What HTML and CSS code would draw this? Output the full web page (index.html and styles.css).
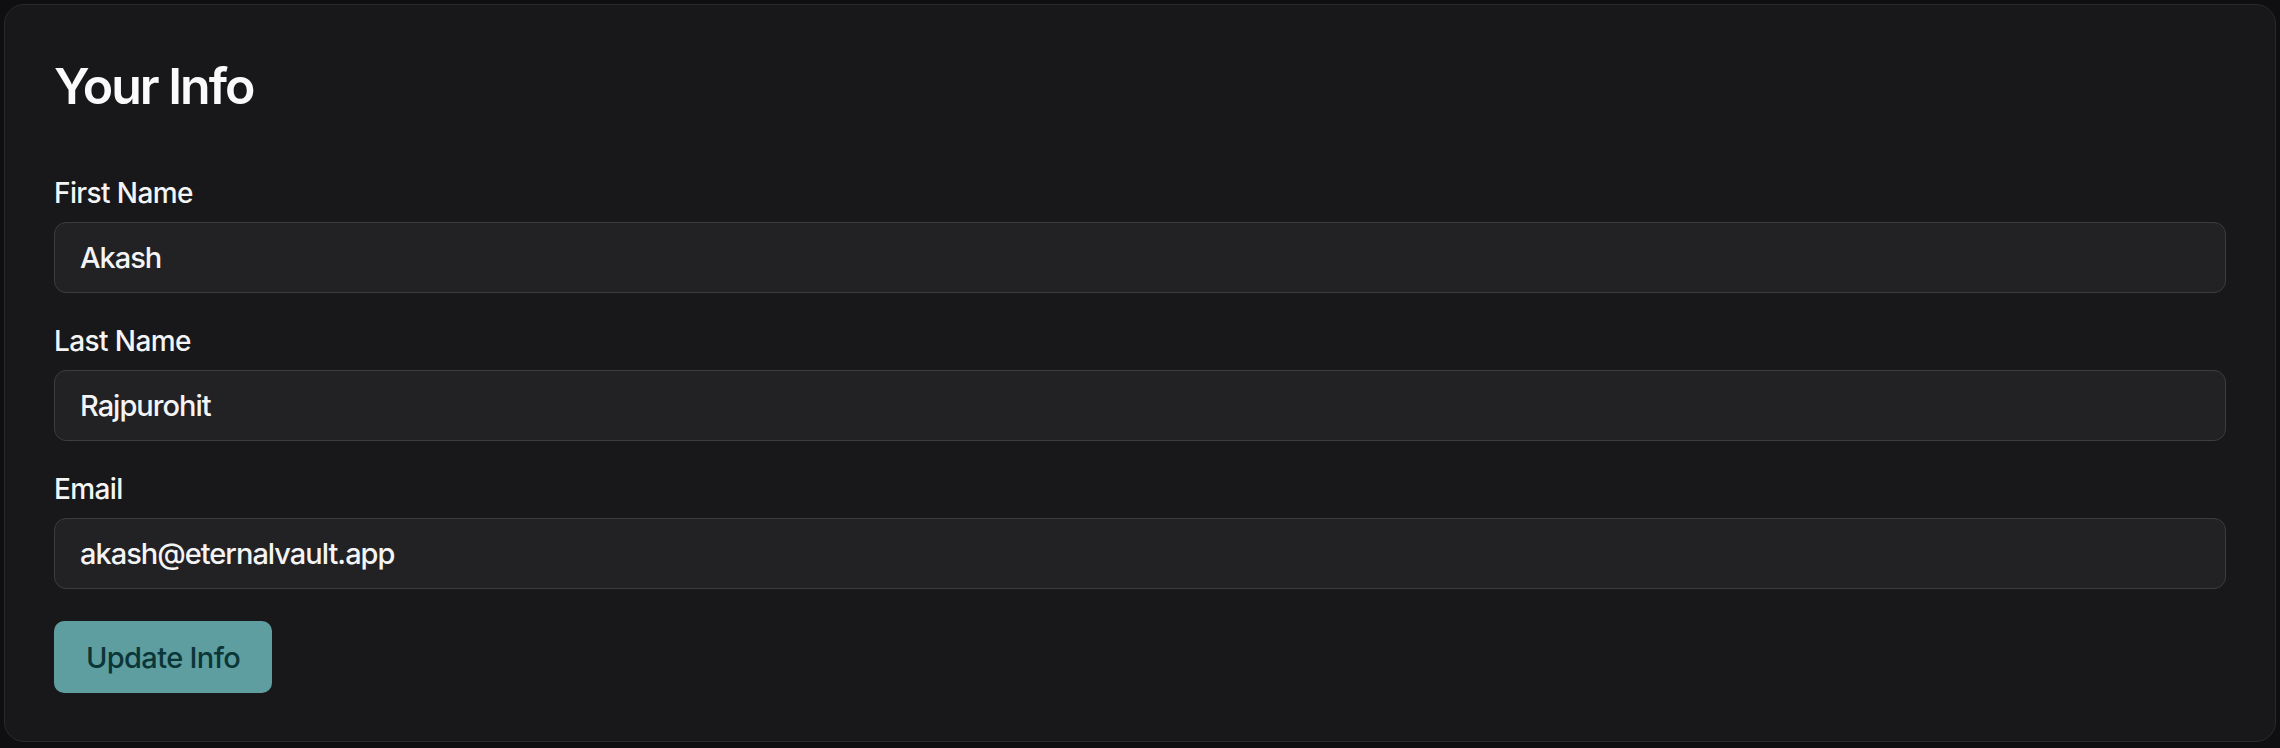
FILE: index.html
```html
<!DOCTYPE html>
<html lang="en">
<head>
<meta charset="utf-8">
<title>Your Info</title>
<link rel="stylesheet" href="styles.css">
</head>
<body>
  <section class="card">
    <h1 class="title">Your Info</h1>
    <form class="form">
      <div class="field">
        <label class="label" for="first">First Name</label>
        <input class="input" id="first" type="text" value="Akash">
      </div>
      <div class="field">
        <label class="label" for="last">Last Name</label>
        <input class="input" id="last" type="text" value="Rajpurohit">
      </div>
      <div class="field">
        <label class="label" for="email">Email</label>
        <input class="input" id="email" type="email" value="akash@eternalvault.app">
      </div>
      <div class="actions">
        <button class="button" type="button">Update Info</button>
      </div>
    </form>
  </section>
</body>
</html>
```

FILE: styles.css
```css
html, body {
  height: 100%;
}
body {
  margin: 0;
  padding: 4px;
  box-sizing: border-box;
  background: #0f0f11;
  font-family: Inter, "Noto Sans", sans-serif;
  color: #fafafa;
}
.card {
  box-sizing: border-box;
  background: #18181b;
  border: 1px solid #2a2a2d;
  border-radius: 20px;
  padding: 51px 49px 48px;
}
.title {
  margin: 0;
  font-size: 50px;
  line-height: 60px;
  font-weight: 600;
  letter-spacing: -2px;
  color: #fafafa;
}
.form {
  margin-top: 59px;
  display: flex;
  flex-direction: column;
  gap: 30px;
}
.field {
  display: flex;
  flex-direction: column;
  gap: 11px;
}
.label {
  font-size: 28px;
  line-height: 36px;
  font-weight: 500;
  letter-spacing: -0.6px;
  color: #f4f4f5;
}
.input {
  box-sizing: border-box;
  height: 71px;
  width: 100%;
  margin: 0;
  padding: 0 25px;
  background: #222225;
  border: 1.5px solid #3c3c40;
  border-radius: 12px;
  font-family: inherit;
  font-size: 29px;
  font-weight: 500;
  letter-spacing: -1px;
  color: #f4f4f5;
  outline: none;
}
.actions {
  margin-top: 2px;
  display: flex;
}
.button {
  box-sizing: border-box;
  height: 72px;
  padding: 0 32px;
  background: #5f9ea0;
  border: none;
  border-radius: 10px;
  font-family: inherit;
  font-size: 29px;
  font-weight: 500;
  letter-spacing: -0.65px;
  color: #0b3638;
  cursor: pointer;
}
```
